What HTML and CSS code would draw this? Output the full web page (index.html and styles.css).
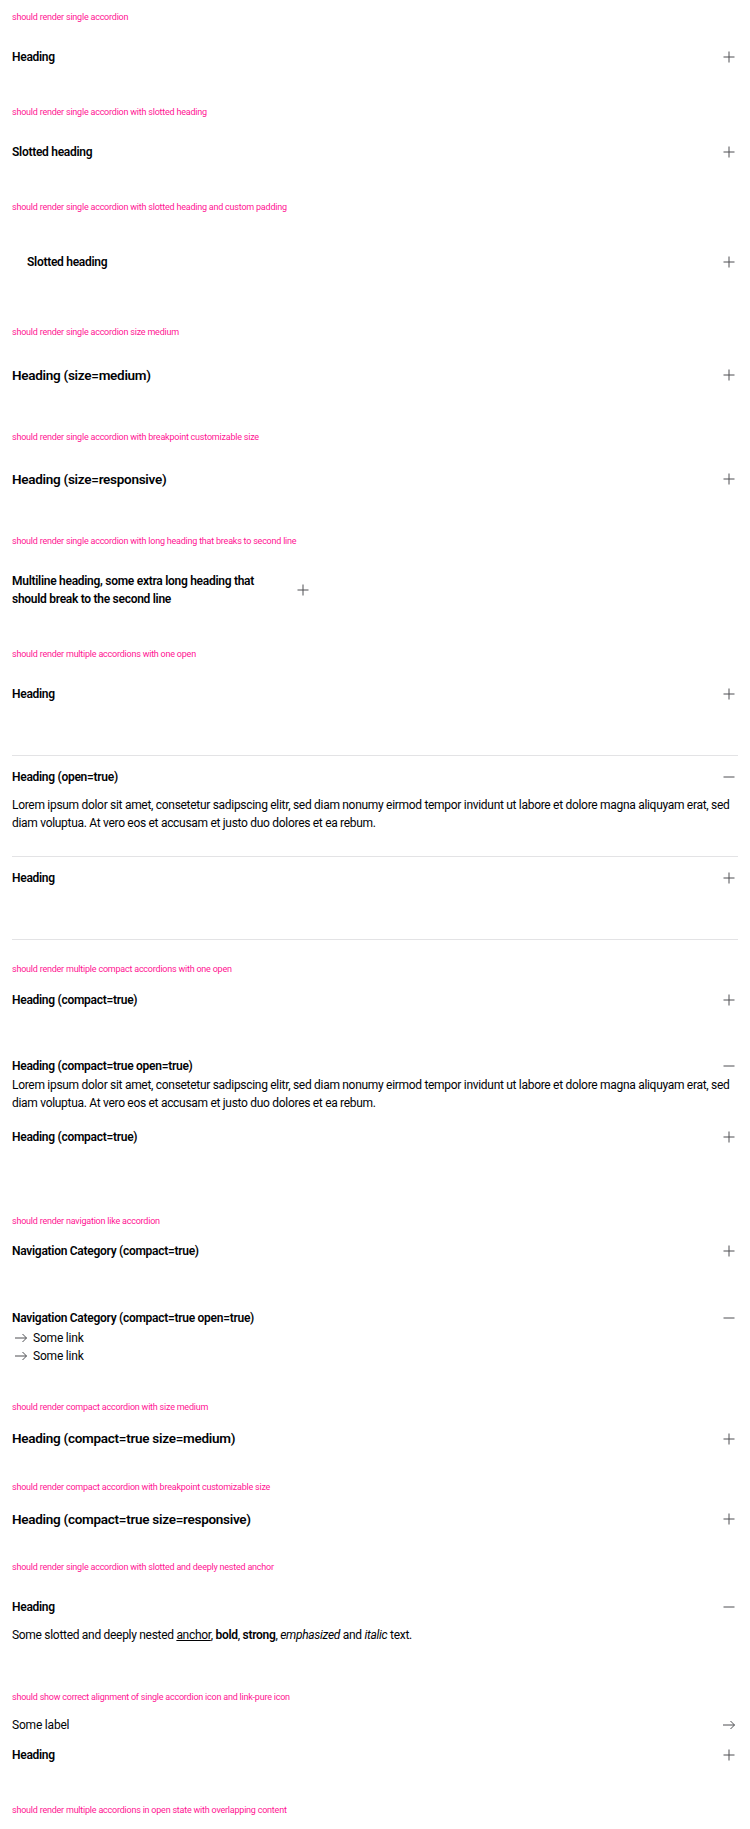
FILE: index.html
```html
<!DOCTYPE html>
<html lang="en">
<head>
<meta charset="utf-8">
<title>Accordion</title>
<link rel="stylesheet" href="styles.css">
</head>
<body>
<svg class="defs" width="0" height="0" aria-hidden="true">
  <defs>
    <symbol id="i-plus" viewBox="0 0 18 18"><path d="M3.5 9h11M9 3.5v11" fill="none" stroke="currentColor" stroke-width="1"/></symbol>
    <symbol id="i-minus" viewBox="0 0 18 18"><path d="M3.5 9h11" fill="none" stroke="currentColor" stroke-width="1"/></symbol>
    <symbol id="i-arrow" viewBox="0 0 18 18"><path d="M3 9h11.5M10.5 5l4 4-4 4" fill="none" stroke="currentColor" stroke-width="1"/></symbol>
  </defs>
</svg>

<div class="pg">
  <p class="pg-title">should render single accordion</p>
  <div class="acc">
    <div class="acc-head"><h2 class="acc-heading">Heading</h2><svg class="acc-icon"><use href="#i-plus"/></svg></div>
  </div>
</div>

<div class="pg">
  <p class="pg-title">should render single accordion with slotted heading</p>
  <div class="acc">
    <div class="acc-head"><h2 class="acc-heading">Slotted heading</h2><svg class="acc-icon"><use href="#i-plus"/></svg></div>
  </div>
</div>

<div class="pg">
  <p class="pg-title">should render single accordion with slotted heading and custom padding</p>
  <div class="acc">
    <div class="acc-head"><h2 class="acc-heading acc-heading--padded">Slotted heading</h2><svg class="acc-icon"><use href="#i-plus"/></svg></div>
  </div>
</div>

<div class="pg">
  <p class="pg-title">should render single accordion size medium</p>
  <div class="acc acc--medium">
    <div class="acc-head"><h2 class="acc-heading">Heading (size=medium)</h2><svg class="acc-icon"><use href="#i-plus"/></svg></div>
  </div>
</div>

<div class="pg">
  <p class="pg-title">should render single accordion with breakpoint customizable size</p>
  <div class="acc acc--medium">
    <div class="acc-head"><h2 class="acc-heading">Heading (size=responsive)</h2><svg class="acc-icon"><use href="#i-plus"/></svg></div>
  </div>
</div>

<div class="pg">
  <p class="pg-title">should render single accordion with long heading that breaks to second line</p>
  <div class="acc acc--narrow">
    <div class="acc-head"><h2 class="acc-heading">Multiline heading, some extra long heading that should break to the second line</h2><svg class="acc-icon"><use href="#i-plus"/></svg></div>
  </div>
</div>

<div class="pg pg--stack">
  <p class="pg-title">should render multiple accordions with one open</p>
  <div class="acc acc--bordered">
    <div class="acc-head"><h2 class="acc-heading">Heading</h2><svg class="acc-icon"><use href="#i-plus"/></svg></div>
  </div>
  <div class="acc acc--bordered acc--open">
    <div class="acc-head"><h2 class="acc-heading">Heading (open=true)</h2><svg class="acc-icon"><use href="#i-minus"/></svg></div>
    <p class="acc-content">Lorem ipsum dolor sit amet, consetetur sadipscing elitr, sed diam nonumy eirmod tempor invidunt ut labore et dolore magna aliquyam erat, sed diam voluptua. At vero eos et accusam et justo duo dolores et ea rebum.</p>
  </div>
  <div class="acc acc--bordered">
    <div class="acc-head"><h2 class="acc-heading">Heading</h2><svg class="acc-icon"><use href="#i-plus"/></svg></div>
  </div>
</div>

<div class="pg pg--stack">
  <p class="pg-title">should render multiple compact accordions with one open</p>
  <div class="acc acc--compact acc--stack">
    <div class="acc-head"><h2 class="acc-heading">Heading (compact=true)</h2><svg class="acc-icon"><use href="#i-plus"/></svg></div>
  </div>
  <div class="acc acc--compact acc--stack acc--open">
    <div class="acc-head"><h2 class="acc-heading">Heading (compact=true open=true)</h2><svg class="acc-icon"><use href="#i-minus"/></svg></div>
    <p class="acc-content">Lorem ipsum dolor sit amet, consetetur sadipscing elitr, sed diam nonumy eirmod tempor invidunt ut labore et dolore magna aliquyam erat, sed diam voluptua. At vero eos et accusam et justo duo dolores et ea rebum.</p>
  </div>
  <div class="acc acc--compact acc--stack">
    <div class="acc-head"><h2 class="acc-heading">Heading (compact=true)</h2><svg class="acc-icon"><use href="#i-plus"/></svg></div>
  </div>
</div>

<div class="pg pg--stack">
  <p class="pg-title">should render navigation like accordion</p>
  <div class="acc acc--compact acc--stack">
    <div class="acc-head"><h2 class="acc-heading">Navigation Category (compact=true)</h2><svg class="acc-icon"><use href="#i-plus"/></svg></div>
  </div>
  <div class="acc acc--compact acc--stack acc--open">
    <div class="acc-head"><h2 class="acc-heading">Navigation Category (compact=true open=true)</h2><svg class="acc-icon"><use href="#i-minus"/></svg></div>
    <ul class="acc-links">
      <li><a class="link-pure" href="#"><svg class="link-icon"><use href="#i-arrow"/></svg><span>Some link</span></a></li>
      <li><a class="link-pure" href="#"><svg class="link-icon"><use href="#i-arrow"/></svg><span>Some link</span></a></li>
    </ul>
  </div>
</div>

<div class="pg">
  <p class="pg-title">should render compact accordion with size medium</p>
  <div class="acc acc--compact acc--cmedium">
    <div class="acc-head"><h2 class="acc-heading">Heading (compact=true size=medium)</h2><svg class="acc-icon"><use href="#i-plus"/></svg></div>
  </div>
</div>

<div class="pg">
  <p class="pg-title">should render compact accordion with breakpoint customizable size</p>
  <div class="acc acc--compact acc--cmedium">
    <div class="acc-head"><h2 class="acc-heading">Heading (compact=true size=responsive)</h2><svg class="acc-icon"><use href="#i-plus"/></svg></div>
  </div>
</div>

<div class="pg">
  <p class="pg-title">should render single accordion with slotted and deeply nested anchor</p>
  <div class="acc acc--open">
    <div class="acc-head"><h2 class="acc-heading">Heading</h2><svg class="acc-icon"><use href="#i-minus"/></svg></div>
    <p class="acc-content">Some slotted and deeply nested <span><span><a class="inline-link" href="#">anchor</a></span></span>, <b>bold</b>, <strong>strong</strong>, <em>emphasized</em> and <i>italic</i> text.</p>
  </div>
</div>

<div class="pg">
  <p class="pg-title">should show correct alignment of single accordion icon and link-pure icon</p>
  <a class="link-row" href="#"><span>Some label</span><svg class="link-icon"><use href="#i-arrow"/></svg></a>
  <div class="acc">
    <div class="acc-head"><h2 class="acc-heading">Heading</h2><svg class="acc-icon"><use href="#i-plus"/></svg></div>
  </div>
</div>

<div class="pg">
  <p class="pg-title">should render multiple accordions in open state with overlapping content</p>
</div>
</body>
</html>
```

FILE: styles.css
```css
* {
  box-sizing: border-box;
}

html,
body {
  background: #ffffff;
}

body {
  margin: 0;
  font-family: Roboto, "Liberation Sans", sans-serif;
  color: #010205;
}

.defs {
  position: absolute;
  width: 0;
  height: 0;
  overflow: hidden;
}

/* playground */
.pg {
  padding: 11px 12px;
}

.pg--stack {
  padding-bottom: 12px;
}

.pg-title {
  margin: 0 0 11px;
  font-size: 9px;
  line-height: 13.5px;
  letter-spacing: -0.22px;
  color: #ff1493;
}

/* accordion */
.acc {
  padding-bottom: 18.5px;
}

.acc-head {
  display: flex;
  align-items: center;
  gap: 18px;
  padding-top: 12px;
}

.acc-heading {
  flex: 1 1 auto;
  margin: 0;
  font-size: 12px;
  line-height: 18px;
  font-weight: 600;
  letter-spacing: -0.28px;
  color: #010205;
}

.acc-heading--padded {
  padding: 15px;
}

.acc-icon {
  flex: none;
  display: block;
  width: 18px;
  height: 18px;
  color: #4e4f53;
}

.acc-content {
  margin: 10px 0 0;
  font-size: 12px;
  line-height: 18px;
  letter-spacing: -0.3px;
}

.acc--open {
  padding-bottom: 25.5px;
}

.acc--medium {
  padding-bottom: 20px;
}

.acc--medium .acc-head {
  padding-top: 10px;
}

.acc--medium .acc-heading {
  font-size: 13.5px;
  line-height: 28px;
}

.acc--narrow {
  width: 300px;
}

.acc--bordered {
  padding-bottom: 52px;
  border-bottom: 1px solid #e3e3e5;
}

.acc--bordered.acc--open {
  padding-bottom: 24.5px;
}

.acc--compact {
  padding-bottom: 10.5px;
}

.acc--compact .acc-head {
  padding-top: 3px;
}

.acc--compact .acc-content {
  margin-top: 1px;
}

.acc--compact.acc--stack {
  padding-bottom: 45.5px;
}

.acc--compact.acc--open {
  padding-bottom: 13.2px;
}

.acc--cmedium .acc-heading {
  font-size: 13.5px;
  line-height: 20.25px;
}

/* links */
.acc-links {
  list-style: none;
  margin: 2px 0 0;
  padding: 0;
}

.link-pure {
  display: flex;
  align-items: center;
  gap: 3px;
  font-size: 12px;
  line-height: 18px;
  letter-spacing: -0.2px;
  color: #010205;
  text-decoration: none;
}

.link-icon {
  flex: none;
  display: block;
  width: 18px;
  height: 18px;
  color: #4e4f53;
}

.link-row {
  display: flex;
  align-items: center;
  justify-content: space-between;
  font-size: 12px;
  line-height: 18px;
  letter-spacing: -0.2px;
  color: #010205;
  text-decoration: none;
}

.inline-link {
  color: #010205;
  text-decoration: underline;
}

.acc-content b,
.acc-content strong {
  font-weight: 600;
}
```
